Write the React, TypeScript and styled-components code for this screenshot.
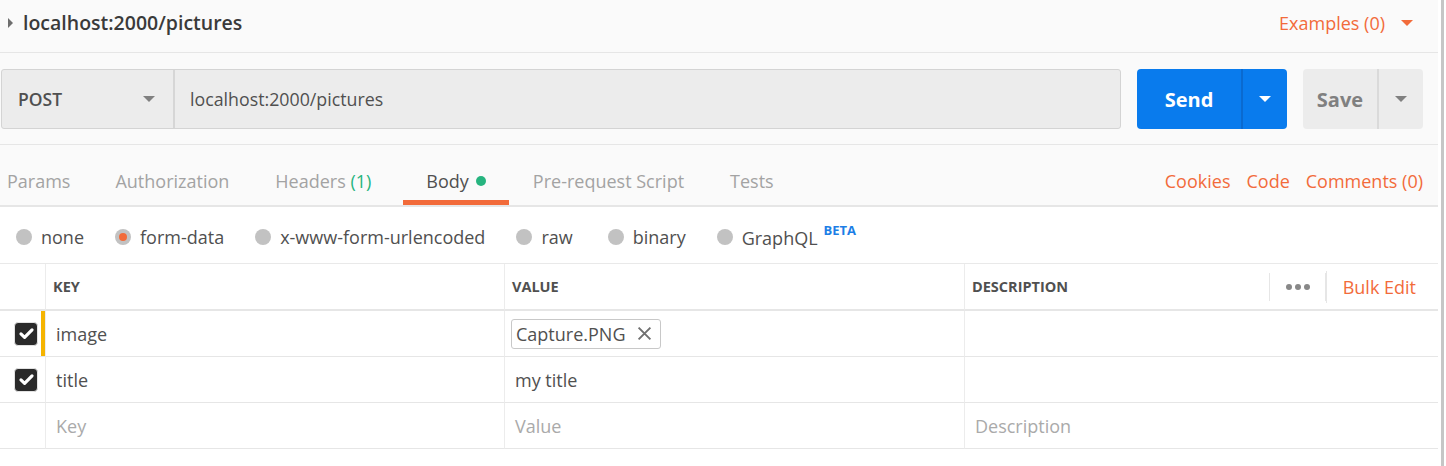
import React from 'react'
import styled, { createGlobalStyle } from 'styled-components'

const GlobalStyle = createGlobalStyle`
  body {
    margin: 0;
    background: #ffffff;
    font-family: "Open Sans", "Liberation Sans", sans-serif;
    color: #505050;
  }
`

const Page = styled.div`
  display: flex;
  width: 1446px;
  height: 466px;
  overflow: hidden;
`

const Main = styled.div`
  width: 1438px;
  display: flex;
  flex-direction: column;
`

const ScrollTrack = styled.div`
  width: 8px;
  display: flex;
  justify-content: center;
  & > div {
    width: 3px;
    background: #c6c6c6;
  }
`

const TopBar = styled.div`
  height: 53px;
  background: #fafafa;
  border-bottom: 1px solid #e6e6e6;
  display: flex;
  align-items: center;
  padding: 0 24px 7px 8px;
  box-sizing: border-box;
`

const Title = styled.div`
  display: flex;
  align-items: center;
  gap: 10px;
  font-size: 19.5px;
  font-weight: 600;
  color: #3a3a3a;
  flex: 1;
`

const Caret = styled.span<{ color: string; dir?: 'down' | 'right'; size?: number }>`
  width: 0;
  height: 0;
  display: inline-block;
  ${({ color, dir = 'down', size = 6 }) =>
    dir === 'down'
      ? `border-left: ${size}px solid transparent;
         border-right: ${size}px solid transparent;
         border-top: ${size}px solid ${color};`
      : `border-top: ${size - 1}px solid transparent;
         border-bottom: ${size - 1}px solid transparent;
         border-left: ${size - 1}px solid ${color};`}
`

const OrangeLink = styled.span`
  color: #f26b3a;
  font-size: 18px;
  font-weight: 400;
`

const Examples = styled.div`
  display: flex;
  align-items: center;
  gap: 16px;
  margin-right: 1px;
`

const RequestSection = styled.div`
  background: #fafafa;
  border-bottom: 1px solid #e6e6e6;
  padding: 16px 15px 15px 1px;
  display: flex;
  gap: 16px;
`

const UrlBox = styled.div`
  flex: 1;
  height: 60px;
  display: flex;
  background: #ececec;
  border: 1px solid #d4d4d4;
  border-radius: 3px;
  box-sizing: border-box;
`

const Method = styled.div`
  width: 173px;
  display: flex;
  align-items: center;
  justify-content: space-between;
  padding: 0 18px 0 16px;
  box-sizing: border-box;
  border-right: 2px solid #d6d6d6;
  font-size: 17.5px;
  font-weight: 600;
  color: #505050;
`

const UrlText = styled.div`
  display: flex;
  align-items: center;
  padding-left: 15px;
  font-size: 17.8px;
  color: #505050;
`

const SplitButton = styled.div<{ primary?: boolean; width: number; caretWidth: number }>`
  width: ${({ width }) => width}px;
  height: 60px;
  display: grid;
  grid-template-columns: 1fr ${({ caretWidth }) => caretWidth}px;
  border-radius: 4px;
  background: ${({ primary }) => (primary ? '#097bed' : '#ececec')};
  color: ${({ primary }) => (primary ? '#ffffff' : '#808080')};
  font-size: 20px;
  font-weight: 700;
  & > div {
    display: flex;
    align-items: center;
    justify-content: center;
  }
  & > div + div {
    border-left: 2px solid ${({ primary }) => (primary ? '#0a6ad0' : '#dadada')};
  }
`

const Tabs = styled.div`
  height: 60px;
  background: #fafafa;
  border-bottom: 2px solid #e6e6e6;
  display: flex;
  align-items: stretch;
  padding: 0 15px 0 0;
`

const Tab = styled.div<{ active?: boolean; left: number; right: number }>`
  display: flex;
  align-items: center;
  gap: 7px;
  padding: 16px ${({ right }) => right}px 0 ${({ left }) => left}px;
  font-size: 18px;
  color: ${({ active }) => (active ? '#505050' : '#a3a3a3')};
  border-bottom: 5px solid ${({ active }) => (active ? '#f26b3a' : 'transparent')};
`

const Green = styled.span`
  color: #26b47f;
`

const Dot = styled.span`
  width: 10px;
  height: 10px;
  border-radius: 50%;
  background: #26b47f;
  display: inline-block;
  margin-top: 1px;
`

const TabLinks = styled.div`
  margin-left: auto;
  display: flex;
  align-items: center;
  gap: 16px;
  padding-top: 16px;
  padding-bottom: 5px;
`

const RadioRow = styled.div`
  height: 57px;
  border-bottom: 1px solid #e9e9e9;
  display: flex;
  align-items: center;
  padding: 3px 0 0 16px;
  box-sizing: border-box;
  gap: 31px;
`

const RadioItem = styled.label<{ extra?: number }>`
  display: flex;
  align-items: center;
  gap: 9px;
  font-size: 18px;
  color: #505050;
  margin-left: ${({ extra = 0 }) => extra}px;
`

const RadioCircle = styled.span<{ checked?: boolean }>`
  width: 16px;
  height: 16px;
  border-radius: 50%;
  background: #c2c2c2;
  display: flex;
  align-items: center;
  justify-content: center;
  &::after {
    content: '';
    width: 8px;
    height: 8px;
    border-radius: 50%;
    background: ${({ checked }) => (checked ? '#f26b3a' : 'transparent')};
  }
`

const Beta = styled.sup`
  color: #1c7ee6;
  font-size: 13px;
  font-weight: 700;
  margin-left: 6px;
  position: relative;
  top: -3px;
`

const Grid = styled.div`
  display: grid;
  grid-template-columns: 45px 459px 460px 1fr;
`

const HeadCell = styled.div<{ first?: boolean }>`
  height: 47px;
  box-sizing: border-box;
  border-bottom: 2px solid #e6e6e6;
  border-left: ${({ first }) => (first ? 'none' : '1px solid #ececec')};
  display: flex;
  align-items: center;
  padding-left: 7px;
  font-size: 14.5px;
  font-weight: 700;
  color: #505050;
`

const HeadActions = styled.div`
  margin-left: auto;
  display: flex;
  align-items: center;
  height: 100%;
  & > span {
    height: 28px;
    border-left: 1px solid #e6e6e6;
  }
`

const More = styled.div`
  display: flex;
  gap: 3px;
  padding: 0 15px 0 16px;
  & > i {
    width: 6px;
    height: 6px;
    border-radius: 50%;
    background: #888888;
  }
`

const BulkEdit = styled(OrangeLink)`
  padding: 4px 22px 0 16px;
`

const Cell = styled.div<{ first?: boolean; placeholder?: boolean }>`
  height: 46px;
  border-bottom: 1px solid #e6e6e6;
  border-left: ${({ first }) => (first ? 'none' : '1px solid #ececec')};
  display: flex;
  align-items: center;
  justify-content: ${({ first }) => (first ? 'flex-end' : 'flex-start')};
  padding-left: ${({ first }) => (first ? 0 : 10)}px;
  font-size: 18px;
  color: ${({ placeholder }) => (placeholder ? '#aaaaaa' : '#505050')};
  box-sizing: border-box;
`

const Marker = styled.span`
  width: 4px;
  height: 100%;
  background: #f5b400;
  margin-left: 3px;
`

const CheckBox = styled.span`
  width: 24px;
  height: 24px;
  border-radius: 4px;
  background: #2a2a2a;
  border: 1px solid #e2e2e2;
  box-sizing: border-box;
  display: flex;
  align-items: center;
  justify-content: center;
`

const CheckWrap = styled.span<{ marked?: boolean }>`
  display: flex;
  align-items: center;
  height: 100%;
  margin-right: ${({ marked }) => (marked ? 0 : 7)}px;
`

const FileChip = styled.span`
  display: inline-flex;
  align-items: center;
  height: 28px;
  border: 1px solid #c8c8c8;
  border-radius: 3px;
  padding: 0 8px 0 4px;
  gap: 12px;
  margin-left: -4px;
  font-size: 18px;
`

function Check() {
  return (
    <CheckBox>
      <svg width="17" height="17" viewBox="0 0 16 16">
        <path d="M2.8 8.4l3.4 3.3L13.2 4.6" fill="none" stroke="#ffffff" strokeWidth="3" strokeLinecap="round" strokeLinejoin="round" />
      </svg>
    </CheckBox>
  )
}

const bodyTypes = [
  { label: 'none' },
  { label: 'form-data', checked: true },
  { label: 'x-www-form-urlencoded' },
  { label: 'raw' },
  { label: 'binary', extra: 4 },
  { label: 'GraphQL', beta: true },
]

const rows = [
  { key: 'image', value: 'file', marked: true },
  { key: 'title', value: 'my title', marked: false },
]

export default function App() {
  return (
    <Page>
      <GlobalStyle />
      <Main>
        <TopBar>
          <Title>
            <Caret color="#6e6e6e" dir="right" size={6} />
            localhost:2000/pictures
          </Title>
          <Examples>
            <OrangeLink>Examples (0)</OrangeLink>
            <Caret color="#f26b3a" size={6} />
          </Examples>
        </TopBar>

        <RequestSection>
          <UrlBox>
            <Method>
              POST
              <Caret color="#808080" size={6} />
            </Method>
            <UrlText>localhost:2000/pictures</UrlText>
          </UrlBox>
          <SplitButton primary width={150} caretWidth={46}>
            <div>Send</div>
            <div>
              <Caret color="#ffffff" size={6} />
            </div>
          </SplitButton>
          <SplitButton width={120} caretWidth={46}>
            <div>Save</div>
            <div>
              <Caret color="#808080" size={6} />
            </div>
          </SplitButton>
        </RequestSection>

        <Tabs>
          <Tab left={7} right={23}>Params</Tab>
          <Tab left={22} right={23}>Authorization</Tab>
          <Tab left={23} right={32}>
            <span>
              Headers <Green>(1)</Green>
            </span>
          </Tab>
          <Tab left={23} right={23} active>
            Body <Dot />
          </Tab>
          <Tab left={24} right={23}>Pre-request Script</Tab>
          <Tab left={23} right={22}>Tests</Tab>
          <TabLinks>
            <OrangeLink>Cookies</OrangeLink>
            <OrangeLink>Code</OrangeLink>
            <OrangeLink>Comments (0)</OrangeLink>
          </TabLinks>
        </Tabs>

        <RadioRow>
          {bodyTypes.map(type => (
            <RadioItem key={type.label} extra={type.extra}>
              <RadioCircle checked={type.checked} />
              <span>
                {type.label}
                {type.beta && <Beta>BETA</Beta>}
              </span>
            </RadioItem>
          ))}
        </RadioRow>

        <Grid>
          <HeadCell first />
          <HeadCell>KEY</HeadCell>
          <HeadCell>VALUE</HeadCell>
          <HeadCell>
            DESCRIPTION
            <HeadActions>
              <span />
              <More>
                <i />
                <i />
                <i />
              </More>
              <span />
              <BulkEdit>Bulk Edit</BulkEdit>
            </HeadActions>
          </HeadCell>

          {rows.map(row => (
            <React.Fragment key={row.key}>
              <Cell first>
                <CheckWrap marked={row.marked}>
                  <Check />
                  {row.marked && <Marker />}
                </CheckWrap>
              </Cell>
              <Cell>{row.key}</Cell>
              <Cell>
                {row.value === 'file' ? (
                  <FileChip>
                    Capture.PNG
                    <svg width="15" height="15" viewBox="0 0 14 14">
                      <path d="M1.5 1.5l11 11M12.5 1.5l-11 11" stroke="#707070" strokeWidth="1.8" />
                    </svg>
                  </FileChip>
                ) : (
                  row.value
                )}
              </Cell>
              <Cell />
            </React.Fragment>
          ))}
          <Cell first />
          <Cell placeholder>Key</Cell>
          <Cell placeholder>Value</Cell>
          <Cell placeholder>Description</Cell>
        </Grid>
      </Main>
      <ScrollTrack>
        <div />
      </ScrollTrack>
    </Page>
  )
}
